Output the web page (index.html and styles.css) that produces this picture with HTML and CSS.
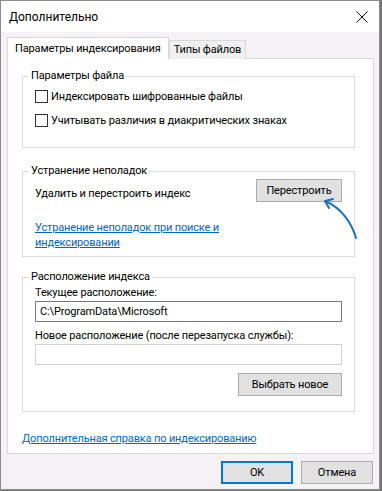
FILE: index.html
```html
<!DOCTYPE html>
<html>
  <head>
    <meta charset="UTF-8">
    <title>Дополнительно</title>
    <link rel="stylesheet" href="styles.css">
  </head>
  <body>
    <div class="window">
      <div class="title-bar">
        <span class="title">Дополнительно</span>
        <svg class="close" width="12" height="12" viewBox="0 0 12 12">
          <path d="M0.5 0.5 L11.5 11.5 M11.5 0.5 L0.5 11.5" stroke="#111" stroke-width="1" fill="none"/>
        </svg>
      </div>
      <div class="content">
        <div class="tabs">
          <div class="tab active">Параметры индексирования</div>
          <div class="tab">Типы файлов</div>
        </div>
        <div class="panel">
          <fieldset class="group group-file">
            <legend>Параметры файла</legend>
            <label class="check"><span class="box"></span>Индексировать шифрованные файлы</label>
            <label class="check"><span class="box"></span>Учитывать различия в диакритических знаках</label>
          </fieldset>

          <fieldset class="group group-trouble">
            <legend>Устранение неполадок</legend>
            <div class="row">
              <span>Удалить и перестроить индекс</span>
              <div class="btn-wrap">
                <button class="btn">Перестроить</button>
                <svg class="arrow" width="45" height="48" viewBox="0 0 45 48">
                  <path d="M40 44 C 36 30, 26 14, 9 7" stroke="#1f6fc8" stroke-width="2" fill="none" stroke-linecap="round"/>
                  <path d="M17 5 L9 7 L13 14" stroke="#1f6fc8" stroke-width="2" fill="none" stroke-linecap="round" stroke-linejoin="round"/>
                </svg>
              </div>
            </div>
            <a class="link trouble-link" href="#">Устранение неполадок при поиске и<br>индексировании</a>
          </fieldset>

          <fieldset class="group group-location">
            <legend>Расположение индекса</legend>
            <div class="field-label first">Текущее расположение:</div>
            <div class="input current">C:\ProgramData\Microsoft</div>
            <div class="field-label">Новое расположение (после перезапуска службы):</div>
            <div class="input empty"></div>
            <div class="actions">
              <button class="btn">Выбрать новое</button>
            </div>
          </fieldset>

          <a class="link help-link" href="#">Дополнительная справка по индексированию</a>
        </div>
        <div class="footer">
          <button class="btn btn-ok">OK</button>
          <button class="btn">Отмена</button>
        </div>
      </div>
    </div>
  </body>
</html>
```

FILE: styles.css
```css
body {
  margin: 0;
  background-color: #777;
  font-family: Roboto, "Noto Sans", sans-serif;
  font-size: 11px;
  letter-spacing: -0.15px;
  color: #000;
}
.window {
  width: 378px;
  height: 488px;
  border: 1px solid #8c8c8c;
  background-color: #f5f2f5;
  display: flex;
  flex-direction: column;
}
.title-bar {
  height: 31px;
  background-color: #fff;
  display: flex;
  align-items: center;
  justify-content: space-between;
  padding: 0 11px 0 8px;
}
.title {
  font-size: 12px;
  letter-spacing: 0;
}
.content {
  padding: 6px 5px 0 6px;
  display: flex;
  flex-direction: column;
}
.tabs {
  display: flex;
  align-items: flex-end;
  height: 21px;
  margin-bottom: -1px;
  position: relative;
  z-index: 1;
}
.tab {
  border: 1px solid #d9d9d9;
  border-bottom: none;
  padding: 0 4px;
  height: 18px;
  line-height: 18px;
  background-color: #f0f0f0;
}
.tab.active {
  background-color: #fff;
  height: 21px;
  line-height: 21px;
  padding: 0 7px;
}
.panel {
  background-color: #fff;
  border: 1px solid #d9d9d9;
  height: 394px;
  padding: 0 18px 0 14px;
  display: flex;
  flex-direction: column;
}
.group {
  border: 1px solid #dcdcdc;
  margin: 0;
  padding: 0 12px;
}
.group legend {
  padding: 0 2px;
  margin-left: -6px;
  line-height: 14px;
}
.group-file {
  margin-top: 10px;
  height: 72px;
  padding-top: 5px;
}
.check {
  display: flex;
  align-items: center;
  height: 16px;
  margin-bottom: 8px;
}
.box {
  width: 11px;
  height: 11px;
  border: 1px solid #333;
  margin-right: 3px;
  background-color: #fff;
}
.group-trouble {
  margin-top: 16px;
  height: 91px;
}
.row {
  display: flex;
  align-items: center;
  justify-content: space-between;
  margin-top: 1px;
}
.row span {
  padding-top: 5px;
}
.btn-wrap {
  position: relative;
}
.arrow {
  position: absolute;
  left: 60px;
  top: 15px;
}
.btn {
  font-family: inherit;
  font-size: 11px;
  letter-spacing: inherit;
  background-color: #e1e1e1;
  border: 1px solid #adadad;
  height: 23px;
  padding: 0;
  color: #000;
}
.group-trouble .btn {
  width: 86px;
}
.link {
  color: #0066cc;
  text-decoration: underline;
  line-height: 15px;
}
.trouble-link {
  display: block;
  margin-top: 18px;
}
.group-location {
  margin-top: 13px;
  height: 140px;
}
.field-label {
  margin-top: 4px;
  line-height: 15px;
}
.field-label.first {
  margin-top: 1px;
}
.input {
  height: 19px;
  border: 1px solid #7a7a7a;
  margin-top: 1px;
  margin-bottom: 6px;
  padding-left: 4px;
  line-height: 19px;
}
.input.empty {
  border-color: #d0d0d0;
}
.actions {
  display: flex;
  justify-content: flex-end;
  margin-top: 8px;
}
.actions .btn {
  width: 104px;
}
.help-link {
  margin-top: 19px;
}
.footer {
  display: flex;
  justify-content: flex-end;
  gap: 8px;
  margin-top: 7px;
  padding-right: 1px;
}
.footer .btn {
  width: 72px;
}
.btn-ok {
  border: 2px solid #0078d7;
}
```
